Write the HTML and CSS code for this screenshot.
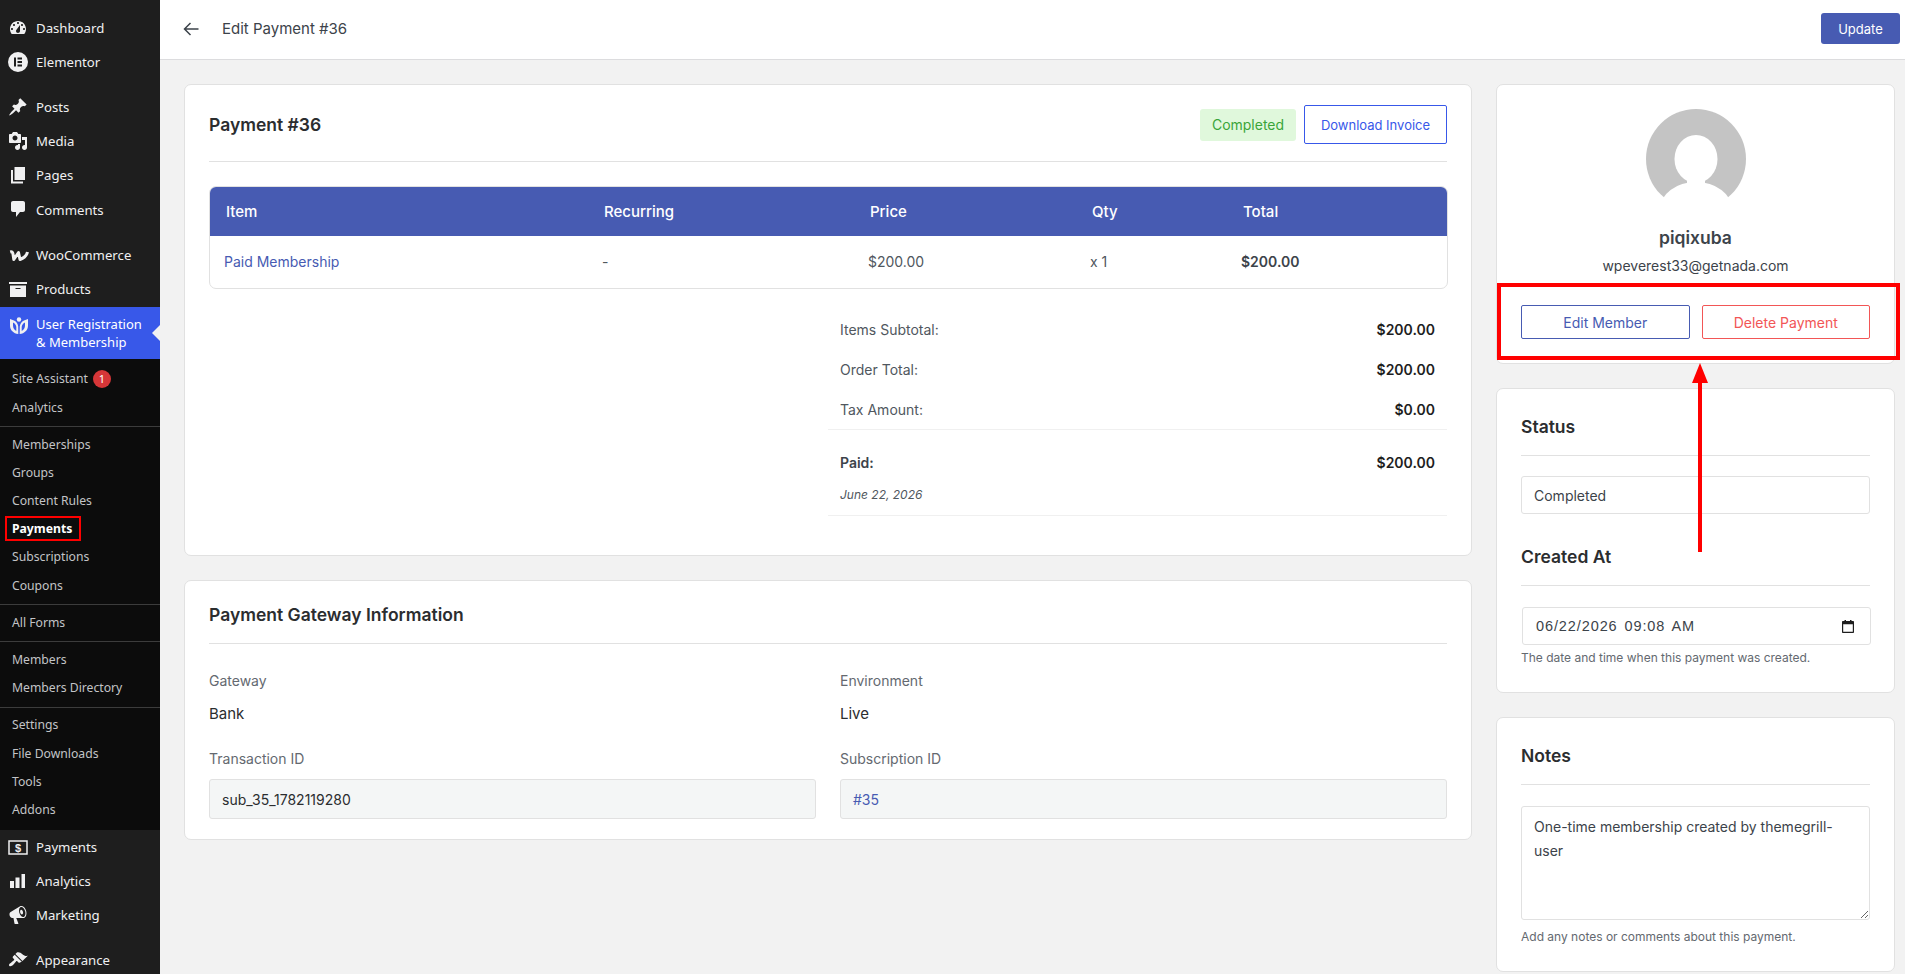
FILE: index.html
```html
<!DOCTYPE html>
<html lang="en">
<head>
    <meta charset="UTF-8">
    <title>Edit Payment #36</title>
    <link rel="stylesheet" href="styles.css">
</head>
<body>
<div class="layout">

    <!-- WP admin menu -->
    <div class="sidebar">
        <div class="menu-group first">
            <a class="menu-item"><svg class="menu-icon" viewBox="0 0 20 20"><path fill-rule="evenodd" d="M3.76 16h12.48c1.1-1.37 1.76-3.11 1.76-5 0-4.42-3.58-8-8-8s-8 3.58-8 8c0 1.89.66 3.63 1.76 5zM10 4c.55 0 1 .45 1 1s-.45 1-1 1-1-.45-1-1 .45-1 1-1zM6 6c.55 0 1 .45 1 1s-.45 1-1 1-1-.45-1-1 .45-1 1-1zm8 0c.55 0 1 .45 1 1s-.45 1-1 1-1-.45-1-1 .45-1 1-1zm-5.37 5.55L12 7v6c0 1.1-.9 2-2 2s-2-.9-2-2c0-.57.24-1.08.63-1.45zM4 10c.55 0 1 .45 1 1s-.45 1-1 1-1-.45-1-1 .45-1 1-1zm12 0c.55 0 1 .45 1 1s-.45 1-1 1-1-.45-1-1 .45-1 1-1z"/></svg>Dashboard</a>
            <a class="menu-item"><svg class="menu-icon" viewBox="0 0 20 20"><path fill-rule="evenodd" d="M10 0a10 10 0 1 0 0 20 10 10 0 0 0 0-20zM6 5.500h2v9H6zM9.500 5.500H14v1.900H9.500zM9.500 9.050H14v1.900H9.500zM9.500 12.600H14v1.900H9.500z"/></svg>Elementor</a>
        </div>
        <div class="menu-group">
            <a class="menu-item"><svg class="menu-icon" viewBox="0 0 20 20"><path d="M10.44 3.02l1.82-1.82 6.36 6.35-1.83 1.82c-1.05-.68-2.48-.57-3.41.36l-.75.75c-.92.93-1.04 2.35-.35 3.41l-1.83 1.82-2.41-2.41-2.8 2.79c-.42.42-3.38 2.71-3.8 2.29s1.86-3.39 2.28-3.81l2.79-2.79L4.1 9.36l1.83-1.82c1.05.69 2.48.57 3.4-.36l.75-.75c.93-.92 1.05-2.35.36-3.41z"/></svg>Posts</a>
            <a class="menu-item"><svg class="menu-icon" viewBox="0 0 20 20"><path fill-rule="evenodd" d="M13 11V4c0-.55-.45-1-1-1h-1.67L9 1H5L3.67 3H2c-.55 0-1 .45-1 1v7c0 .55.45 1 1 1h10c.55 0 1-.45 1-1zM7 4.500c1.38 0 2.500 1.120 2.500 2.500S8.380 9.500 7 9.500 4.500 8.380 4.500 7 5.620 4.500 7 4.500zM14 6h5v10.500c0 1.380-1.120 2.500-2.500 2.500S14 17.880 14 16.500s1.120-2.500 2.500-2.500c.17 0 .34.02.5.05V9h-3V6zm-4 8.050V13h2v3.500c0 1.380-1.120 2.500-2.500 2.500S7 17.880 7 16.500 8.120 14 9.500 14c.17 0 .34.02.5.05z"/></svg>Media</a>
            <a class="menu-item"><svg class="menu-icon" viewBox="0 0 20 20"><path d="M6.500 2H17v13H6.500zM3 5h2v11.500h10V18.500H3z"/></svg>Pages</a>
            <a class="menu-item"><svg class="menu-icon" viewBox="0 0 20 20"><path d="M5 2h10c1.100 0 2 .9 2 2v7c0 1.100-.9 2-2 2h-3l-4 5v-5H5c-1.100 0-2-.9-2-2V4c0-1.100.9-2 2-2z"/></svg>Comments</a>
        </div>
        <div class="menu-group">
            <a class="menu-item"><svg class="menu-icon woo-icon" viewBox="0 0 20 20"><path d="M1.200 7C3 6.500 3.800 7.500 4 9L4.800 14.500 9.500 7.500 11 14.500C14 13.500 17.500 11 18.500 7" fill="none" stroke="#f0f0f1" stroke-width="3" stroke-linejoin="round"/></svg>WooCommerce</a>
            <a class="menu-item"><svg class="menu-icon" viewBox="0 0 20 20"><path fill-rule="evenodd" d="M19 3H1v2h18V3zM2 6.500V18h16V6.500H2zM12.500 10h-5V9h5v1z"/></svg>Products</a>
            <a class="menu-item current"><svg class="menu-icon" viewBox="0 0 20 20"><path d="M1 3l4 1.500C7.500 5.500 9 8 9.200 10.500L9.300 18C4.500 17.600 1 14.200 1 9.500zM19 3l-4 1.500C12.500 5.500 11 8 10.800 10.500L10.700 18c4.800-.4 8.300-3.800 8.300-8.500zM4 6.500v3c0 2.500 1.200 4.500 3.300 5.400v-3.900c0-1.800-1.300-3.600-3.300-4.500zM16 6.500v3c0 2.500-1.200 4.500-3.300 5.400v-3.900c0-1.800 1.300-3.600 3.300-4.500z" fill-rule="evenodd"/><circle cx="10" cy="3.500" r="2.200"/></svg><span>User Registration &amp; Membership</span></a>
            <div class="submenu">
                <div class="sub-group">
                    <a class="sub-item">Site Assistant <span class="count">1</span></a>
                    <a class="sub-item">Analytics</a>
                </div>
                <div class="sub-group">
                    <a class="sub-item">Memberships</a>
                    <a class="sub-item">Groups</a>
                    <a class="sub-item">Content Rules</a>
                    <a class="sub-item active"><span class="marked">Payments</span></a>
                    <a class="sub-item">Subscriptions</a>
                    <a class="sub-item">Coupons</a>
                </div>
                <div class="sub-group">
                    <a class="sub-item">All Forms</a>
                </div>
                <div class="sub-group">
                    <a class="sub-item">Members</a>
                    <a class="sub-item">Members Directory</a>
                </div>
                <div class="sub-group">
                    <a class="sub-item">Settings</a>
                    <a class="sub-item">File Downloads</a>
                    <a class="sub-item">Tools</a>
                    <a class="sub-item">Addons</a>
                </div>
            </div>
            <a class="menu-item"><svg class="menu-icon" viewBox="0 0 20 20"><rect x="1" y="4" width="18" height="13" fill="none" stroke="#f0f0f1" stroke-width="1.500"/><text x="10" y="14.500" text-anchor="middle" class="dollar">$</text></svg>Payments</a>
            <a class="menu-item"><svg class="menu-icon" viewBox="0 0 20 20"><path d="M2 10h4v7H2zM7.500 6.500h4V17h-4zM13.500 3H17v14h-3.500z"/></svg>Analytics</a>
            <a class="menu-item"><svg class="menu-icon" viewBox="0 0 20 20"><path fill-rule="evenodd" d="M18.150 5.940c.46 1.620.38 3.220-.02 4.480-.42 1.280-1.260 2.180-2.300 2.480-.16.06-.26.06-.4.06-.06.02-.12.02-.18.02-.06.02-.14.02-.22.02h-6.800l2.220 5.500c.02.14-.06.26-.14.34-.08.1-.24.16-.34.16H6.950c-.1 0-.26-.06-.34-.16-.08-.08-.16-.2-.14-.34l-1-5.500H4.250l-.02-.02c-.5.06-1.080-.18-1.540-.62s-.88-1.080-1.060-1.880c-.24-.8-.2-1.560-.02-2.200.18-.62.58-1.080 1.060-1.300l.02-.02 9-5.400c.1-.06.18-.1.24-.16.06-.04.14-.08.24-.12.16-.08.28-.12.5-.18 1.040-.3 2.240.1 3.220 1 .98.88 1.800 2.240 2.260 3.860zm-2.580 5.980h-.02c.4-.1.74-.34 1.040-.7.58-.7.86-1.760.86-3.040 0-.64-.1-1.300-.28-1.980-.34-1.360-1.020-2.500-1.780-3.240s-1.680-1.100-2.460-.88c-.82.22-1.400.96-1.700 2-.32 1.040-.28 2.360.06 3.720.38 1.360 1 2.520 1.800 3.240.78.74 1.620 1.100 2.480.88zm-2.540-7.080c.22-.04.42-.02.62.04.38.16.76.48 1.020 1s.42 1.200.42 1.780c0 .3-.04.56-.12.8-.18.48-.44.84-.86.94-.34.1-.8-.06-1.140-.4s-.64-.86-.78-1.500c-.18-.62-.12-1.240.02-1.720s.48-.84.82-.94z"/></svg>Marketing</a>
        </div>
        <div class="menu-group">
            <a class="menu-item"><svg class="menu-icon" viewBox="0 0 20 20"><path d="M14.480 11.060L7.410 3.990l1.500-1.500c.5-.56 2.300-.47 3.510.32 1.210.8 1.430 1.280 2.910 2.100 1.180.64 2.450 1.260 4.450.85zm-.71.71L6.700 4.700 4.930 6.470c-.39.39-.39 1.020 0 1.410l1.060 1.060c.39.39.39 1.030 0 1.420-.6.6-1.430 1.110-2.210 1.690-.35.26-.7.53-1.010.84C1.430 13.230.4 14.840 1.400 15.960c1.010 1 2.730.02 4.080-1.350.32-.32.6-.67.86-1.020.58-.77 1.080-1.610 1.690-2.210.39-.39 1.020-.39 1.410 0l1.060 1.060c.39.39 1.020.39 1.410 0z"/></svg>Appearance</a>
        </div>
    </div>

    <div class="main">
        <!-- Top bar -->
        <div class="topbar">
            <svg class="back-arrow" viewBox="0 0 16 14"><path d="M7.500 1L1.500 7l6 6M1.500 7H15.500" fill="none" stroke="#3c434a" stroke-width="1.500"/></svg>
            <span class="page-title">Edit Payment #36</span>
            <button class="btn-update">Update</button>
        </div>

        <div class="content">
            <div class="column">
                <!-- Payment details -->
                <div class="card card-wide">
                    <div class="card-head">
                        <h3>Payment #36</h3>
                        <div class="head-actions">
                            <span class="badge">Completed</span>
                            <button class="btn-invoice">Download Invoice</button>
                        </div>
                    </div>
                    <div class="items-table">
                        <div class="items-row items-head">
                            <span>Item</span><span>Recurring</span><span>Price</span><span>Qty</span><span>Total</span>
                        </div>
                        <div class="items-row items-body">
                            <a class="link">Paid Membership</a><span>-</span><span>$200.00</span><span>x 1</span><strong>$200.00</strong>
                        </div>
                    </div>
                    <div class="summary">
                        <div class="summary-row"><span>Items Subtotal:</span><strong>$200.00</strong></div>
                        <div class="summary-row"><span>Order Total:</span><strong>$200.00</strong></div>
                        <div class="summary-row"><span>Tax Amount:</span><strong>$0.00</strong></div>
                        <div class="summary-paid">
                            <div class="summary-row paid-row"><strong class="paid-label">Paid:</strong><strong>$200.00</strong></div>
                            <em class="paid-date">June 22, 2026</em>
                        </div>
                    </div>
                </div>

                <!-- Gateway -->
                <div class="card card-wide">
                    <h3 class="section-title">Payment Gateway Information</h3>
                    <div class="gateway-grid">
                        <div>
                            <div class="field-label">Gateway</div>
                            <div class="field-value">Bank</div>
                        </div>
                        <div>
                            <div class="field-label">Environment</div>
                            <div class="field-value">Live</div>
                        </div>
                        <div>
                            <div class="field-label">Transaction ID</div>
                            <div class="field-box">sub_35_1782119280</div>
                        </div>
                        <div>
                            <div class="field-label">Subscription ID</div>
                            <div class="field-box"><a class="link">#35</a></div>
                        </div>
                    </div>
                </div>
            </div>

            <div class="column">
                <!-- Member -->
                <div class="card profile">
                    <svg class="avatar" viewBox="0 0 100 100">
                        <circle cx="50" cy="50" r="50" fill="#c4c4c4"/>
                        <ellipse cx="50" cy="50" rx="21.500" ry="24" fill="#fff"/>
                        <ellipse cx="50" cy="100" rx="36" ry="27" fill="#fff"/>
                        <rect x="41" y="68" width="18" height="10" fill="#fff"/>
                    </svg>
                    <div class="member-name">piqixuba</div>
                    <div class="member-email">wpeverest33@getnada.com</div>
                    <div class="profile-actions">
                        <button class="btn-outline blue">Edit Member</button>
                        <button class="btn-outline red">Delete Payment</button>
                    </div>
                </div>

                <!-- Status -->
                <div class="card card-side">
                    <h3 class="section-title">Status</h3>
                    <input class="text-input" type="text" value="Completed" readonly>
                    <h3 class="section-title created">Created At</h3>
                    <div class="date-field">
                        <span>06/22/2026 09:08 AM</span>
                        <svg class="calendar-icon" viewBox="0 0 12 13"><path fill-rule="evenodd" d="M1 1h10c.55 0 1 .45 1 1v10c0 .55-.45 1-1 1H1c-.55 0-1-.45-1-1V2c0-.55.45-1 1-1zM1.200 4.200v7.600h9.600V4.200z"/><path d="M2.500 0h1.500v1.500H2.500zM8 0h1.500v1.500H8z"/></svg>
                    </div>
                    <p class="help">The date and time when this payment was created.</p>
                </div>

                <!-- Notes -->
                <div class="card card-side">
                    <h3 class="section-title">Notes</h3>
                    <textarea class="notes">One-time membership created by themegrill-user</textarea>
                    <p class="help">Add any notes or comments about this payment.</p>
                </div>
            </div>
        </div>
    </div>
</div>

<!-- Red annotations on the screenshot -->
<div class="callout-box"></div>
<svg class="callout-arrow" viewBox="0 0 20 192"><path d="M10 0L18 20H12V189H8V20H2z" fill="#f00"/></svg>
</body>
</html>
```

FILE: styles.css
```css
* {
    box-sizing: border-box;
}
html, body {
    margin: 0;
    padding: 0;
    height: 974px;
    overflow: hidden;
}
body {
    font-family: 'Inter', sans-serif;
    font-size: 14px;
    color: #3c434a;
    background-color: #f2f2f2;
    position: relative;
}
.layout {
    display: flex;
    height: 974px;
    overflow: hidden;
}

/* Sidebar */
.sidebar {
    width: 160px;
    flex-shrink: 0;
    background-color: #1e1e1e;
    font-family: 'Noto Sans', sans-serif;
    color: #f0f0f1;
    padding-top: 11px;
}
.menu-group {
    margin-bottom: 11px;
}
.menu-item {
    display: flex;
    align-items: center;
    height: 34.1px;
    font-size: 13.2px;
    padding-left: 36px;
    position: relative;
}
.menu-icon {
    position: absolute;
    left: 8px;
    top: 7px;
    width: 20px;
    height: 20px;
    fill: #f0f0f1;
}
.woo-icon {
    width: 22px;
}
.dollar {
    font-family: 'Liberation Sans', sans-serif;
    font-size: 11px;
    font-weight: bold;
    fill: #f0f0f1;
}
.menu-item.current {
    height: 52px;
    margin-top: 1px;
    background-color: #3858e9;
    color: #fff;
    line-height: 18px;
}
.menu-item.current .menu-icon {
    top: 9px;
    left: 9px;
}
.menu-item.current span {
    width: 112px;
    font-size: 13px;
}
.menu-item.current::after {
    content: "";
    position: absolute;
    right: 0;
    top: 18px;
    border: 8px solid transparent;
    border-right-color: #f2f2f2;
    border-left-width: 0;
}
.submenu {
    background-color: #0c0c0c;
    padding-top: 6px;
    height: 471px;
}
.sub-group {
    padding: 0 0 5px;
    margin-bottom: 3px;
    border-bottom: 1px solid #3c3c3c;
}
.sub-group:last-child {
    border-bottom: none;
    margin-bottom: 0;
}
.sub-item {
    display: flex;
    align-items: center;
    height: 28.2px;
    padding-left: 12px;
    font-size: 12.2px;
    color: #c3c4c7;
}
.sub-item.active {
    color: #fff;
    font-weight: 700;
}
.marked {
    position: relative;
}
.marked::after {
    content: "";
    position: absolute;
    left: -7px;
    top: -4px;
    width: 72px;
    height: 21px;
    border: 2px solid #f00;
}
.count {
    display: inline-block;
    width: 18px;
    height: 18px;
    line-height: 18px;
    margin-left: 5px;
    border-radius: 50%;
    background-color: #d63638;
    color: #fff;
    font-size: 11px;
    text-align: center;
}

/* Top bar */
.main {
    flex: 1;
    min-width: 0;
}
.topbar {
    height: 60px;
    display: flex;
    align-items: center;
    padding: 0 5px 2px 23px;
    background-color: #fff;
    border-bottom: 1px solid #dcdcde;
}
.back-arrow {
    width: 16px;
    height: 14px;
    margin-right: 23px;
}
.page-title {
    font-size: 15px;
    color: #3c434a;
}
.btn-update {
    margin-left: auto;
    width: 79px;
    height: 31px;
    border: none;
    border-radius: 3px;
    background-color: #475bb2;
    color: #fff;
    font-family: inherit;
    font-size: 13px;
}

/* Content */
.content {
    display: grid;
    grid-template-columns: 1fr 399px;
    gap: 24px;
    padding: 24px 10px 0 24px;
}
.column {
    display: flex;
    flex-direction: column;
    gap: 24px;
    min-width: 0;
}
.card {
    background-color: #fff;
    border: 1px solid #e1e1e1;
    border-radius: 7px;
    padding: 24px;
}
.card-wide {
    padding-top: 20px;
}
h3 {
    margin: 0;
    font-size: 17.5px;
    line-height: 27px;
    font-weight: 600;
    color: #2b2d2f;
}
.card-head {
    display: flex;
    align-items: center;
    justify-content: space-between;
    padding-bottom: 17px;
    border-bottom: 1px solid #e1e1e1;
}
.head-actions {
    display: flex;
    align-items: center;
    gap: 8px;
}
.badge {
    width: 96px;
    height: 32px;
    line-height: 32px;
    text-align: center;
    border-radius: 3px;
    background-color: #e0f8dc;
    color: #3aa53a;
    font-size: 14px;
}
.btn-invoice {
    width: 143px;
    height: 39px;
    background-color: #fff;
    border: 1px solid #3858e9;
    border-radius: 2px;
    color: #3858e9;
    font-family: inherit;
    font-size: 13px;
}

/* Item table */
.items-table {
    margin: 24px -1px 0 0;
    border: 1px solid #e1e1e1;
    border-radius: 7px;
    overflow: hidden;
}
.items-row {
    display: grid;
    grid-template-columns: 378px 266px 222px 151px 1fr;
    align-items: center;
}
.items-head {
    height: 49px;
    padding-left: 16px;
    background-color: #475bb2;
    color: #fff;
    font-size: 15px;
    font-weight: 500;
}
.items-body {
    height: 52px;
    padding: 0 0 1px 14px;
    color: #50575e;
}
.items-body strong {
    font-weight: 600;
    color: #3c434a;
}
.link {
    color: #475bb2;
}

/* Totals */
.summary {
    width: 619px;
    margin: 20px 0 15px auto;
}
.summary-row {
    display: flex;
    justify-content: space-between;
    align-items: center;
    height: 40px;
    padding: 0 12px;
    color: #50575e;
}
.summary-row strong {
    font-weight: 600;
    color: #1e1e1e;
}
.summary-paid {
    border-top: 1px solid #f0f0f0;
    border-bottom: 1px solid #f0f0f0;
    padding: 12px;
    height: 87px;
}
.paid-row {
    height: 40px;
    padding: 0;
}
.summary-row .paid-label {
    color: #3c434a;
}
.paid-date {
    display: block;
    margin-top: 5px;
    font-size: 12px;
    color: #50575e;
}

/* Gateway block */
.section-title {
    padding-bottom: 15px;
    border-bottom: 1px solid #e1e1e1;
}
.gateway-grid {
    display: grid;
    grid-template-columns: 1fr 1fr;
    column-gap: 24px;
    row-gap: 25px;
    padding-top: 27px;
}
.card-wide:last-child {
    padding-bottom: 20px;
}
.field-label {
    line-height: 20px;
    color: #646970;
}
.field-value {
    line-height: 20px;
    margin-top: 13px;
    font-size: 15px;
    color: #2b2d2f;
}
.field-box {
    height: 40px;
    line-height: 39px;
    margin-top: 10px;
    padding: 0 12px;
    background-color: #f4f6f6;
    border: 1px solid #e1e1e1;
    border-radius: 3px;
    color: #2b2d2f;
}

/* Right column */
.profile {
    text-align: center;
    height: 280px;
}
.avatar {
    display: block;
    width: 100px;
    height: 100px;
    margin: 0 auto;
}
.member-name {
    margin-top: 15px;
    font-size: 17.5px;
    line-height: 27px;
    font-weight: 600;
    color: #3c434a;
}
.member-email {
    margin-top: 5px;
    line-height: 20px;
    color: #3c434a;
}
.profile-actions {
    display: flex;
    gap: 12px;
    margin-top: 29px;
}
.btn-outline {
    flex: 1;
    height: 34px;
    background-color: #fff;
    border: 1px solid;
    border-radius: 2px;
    font-family: inherit;
    font-size: 14px;
}
.btn-outline.blue {
    color: #475bb2;
    border-color: #475bb2;
}
.btn-outline.red {
    color: #f25656;
    border-color: #f25656;
}
.text-input {
    display: block;
    width: 100%;
    height: 38px;
    margin-top: 20px;
    padding: 0 12px;
    background-color: #fff;
    border: 1px solid #e1e1e1;
    border-radius: 3px;
    font-family: inherit;
    font-size: 14px;
    color: #3c434a;
}
.date-field {
    display: flex;
    align-items: center;
    justify-content: space-between;
    height: 38px;
    margin: 21px -1px 0 1px;
    padding: 0 16px 0 13px;
    border: 1px solid #e1e1e1;
    border-radius: 3px;
    font-family: 'Liberation Sans', sans-serif;
    font-size: 14.5px;
    letter-spacing: 0.9px;
    word-spacing: 2px;
    color: #3c434a;
}
.calendar-icon {
    width: 12px;
    height: 13px;
    fill: #1e1e1e;
}
.section-title.created {
    margin-top: 29px;
}
.help {
    margin: 6px 0 0;
    font-size: 12px;
    line-height: 14px;
    color: #646970;
}
.card-side {
    padding-bottom: 27px;
}
.notes {
    display: block;
    width: 100%;
    height: 114px;
    margin-top: 21px;
    padding: 8px 12px;
    border: 1px solid #e1e1e1;
    border-radius: 3px;
    font-family: inherit;
    font-size: 14px;
    line-height: 24px;
    color: #3c434a;
}
.notes + .help {
    margin-top: 10px;
}

/* Annotations */
.callout-box {
    position: absolute;
    left: 1497px;
    top: 283px;
    width: 403px;
    height: 77px;
    border: 4px solid #f00;
}
.callout-arrow {
    position: absolute;
    left: 1690px;
    top: 363px;
    width: 20px;
    height: 192px;
}
```
